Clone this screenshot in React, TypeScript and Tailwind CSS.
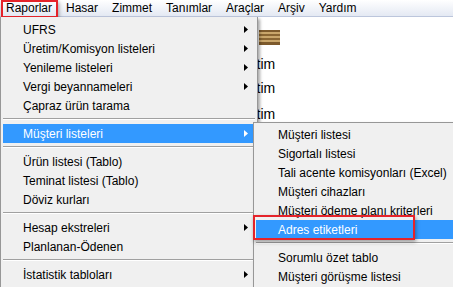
import React from 'react'

type Item = { label: string; sub?: boolean; active?: boolean } | 'sep'

const mainItems: Item[] = [
  { label: 'UFRS', sub: true },
  { label: 'Üretim/Komisyon listeleri', sub: true },
  { label: 'Yenileme listeleri', sub: true },
  { label: 'Vergi beyannameleri', sub: true },
  { label: 'Çapraz ürün tarama' },
  'sep',
  { label: 'Müşteri listeleri', sub: true, active: true },
  'sep',
  { label: 'Ürün listesi (Tablo)' },
  { label: 'Teminat listesi (Tablo)' },
  { label: 'Döviz kurları' },
  'sep',
  { label: 'Hesap ekstreleri', sub: true },
  { label: 'Planlanan-Ödenen' },
  'sep',
  { label: 'İstatistik tabloları', sub: true },
]

const subItems: Item[] = [
  { label: 'Müşteri listesi' },
  { label: 'Sigortalı listesi' },
  { label: 'Tali acente komisyonları (Excel)' },
  { label: 'Müşteri cihazları' },
  { label: 'Müşteri ödeme planı kriterleri' },
  { label: 'Adres etiketleri', active: true },
  'sep',
  { label: 'Sorumlu özet tablo' },
  { label: 'Müşteri görüşme listesi' },
]

const bar = ['Raporlar', 'Hasar', 'Zimmet', 'Tanımlar', 'Araçlar', 'Arşiv', 'Yardım']

function Arrow({ white }: { white?: boolean }) {
  return (
    <svg width="4" height="7" viewBox="0 0 4 7" className="absolute right-[7px] top-[6px]">
      <path d="M0 0 L4 3.5 L0 7 Z" fill={white ? '#ffffff' : '#000000'} />
    </svg>
  )
}

function MenuRows({ items, pl, arrowRight }: { items: Item[]; pl: string; arrowRight?: boolean }) {
  return (
    <>
      {items.map((it, i) =>
        it === 'sep' ? (
          <div key={i} className="h-[9px] pt-[3px] mx-[2px]">
            <div className="border-t border-[#a0a0a0] border-b border-b-white" />
          </div>
        ) : (
          <div
            key={i}
            className={`relative h-[19px] mx-[2px] flex items-center ${pl} ${
              it.active ? 'bg-[#3399ff] text-white' : 'text-black'
            }`}
          >
            {it.label}
            {it.sub && arrowRight && <Arrow white={it.active} />}
          </div>
        )
      )}
    </>
  )
}

function Wood() {
  return (
    <svg width="21" height="15" viewBox="0 0 21 15">
      <rect width="21" height="15" fill="#c9a66b" />
      <rect y="0" width="21" height="2" fill="#7d5a2c" />
      <rect y="4" width="21" height="2" fill="#8a6633" />
      <rect y="8" width="21" height="2" fill="#8a6633" />
      <rect y="12" width="21" height="3" fill="#7d5a2c" />
    </svg>
  )
}

export default function App() {
  return (
    <div
      className="relative w-[453px] h-[287px] overflow-hidden bg-white text-[12px] leading-none"
      style={{ fontFamily: '"Liberation Sans", Arial, sans-serif' }}
    >
      {/* menu bar */}
      <div className="h-[17px] flex items-center pl-[6px] gap-[14px] bg-gradient-to-b from-[#ffffff] to-[#e4e9f3] border-b border-[#bcc6dc]">
        {bar.map(b => (
          <span key={b} className="text-black">
            {b}
          </span>
        ))}
      </div>

      {/* window content behind the menus */}
      <div className="flex flex-col pl-[234px] text-[14px] text-black">
        <div className="pl-[25px] pt-[13px]">
          <Wood />
        </div>
        <div className="pt-[12px]">Üretim</div>
        <div className="pt-[10px]">Üretim</div>
        <div className="pt-[12px]">Üretim</div>
      </div>

      {/* red highlight around Raporlar */}
      <div className="absolute left-[1px] top-0 w-[57px] h-[18px] border-2 border-[#e5232a] shadow-[1px_2px_4px_rgba(0,0,0,0.35)]" />

      {/* main dropdown */}
      <div className="absolute left-0 top-[17px] w-[258px] h-[280px] bg-[#f0f0f0] border border-[#979797] border-t-0 pt-[3px] shadow-[2px_2px_3px_rgba(0,0,0,0.35)]">
        <MenuRows items={mainItems} pl="pl-[20px]" arrowRight />
      </div>

      {/* sub menu */}
      <div className="absolute left-[253px] top-[122px] w-[210px] h-[180px] bg-[#f0f0f0] border border-[#979797] pt-[2px] shadow-[2px_2px_3px_rgba(0,0,0,0.35)]">
        <MenuRows items={subItems} pl="pl-[22px]" />
      </div>

      {/* red highlight around Adres etiketleri */}
      <div className="absolute left-[253px] top-[215px] w-[162px] h-[25px] border-2 border-[#e5232a] shadow-[1px_2px_4px_rgba(0,0,0,0.35)]" />
    </div>
  )
}
